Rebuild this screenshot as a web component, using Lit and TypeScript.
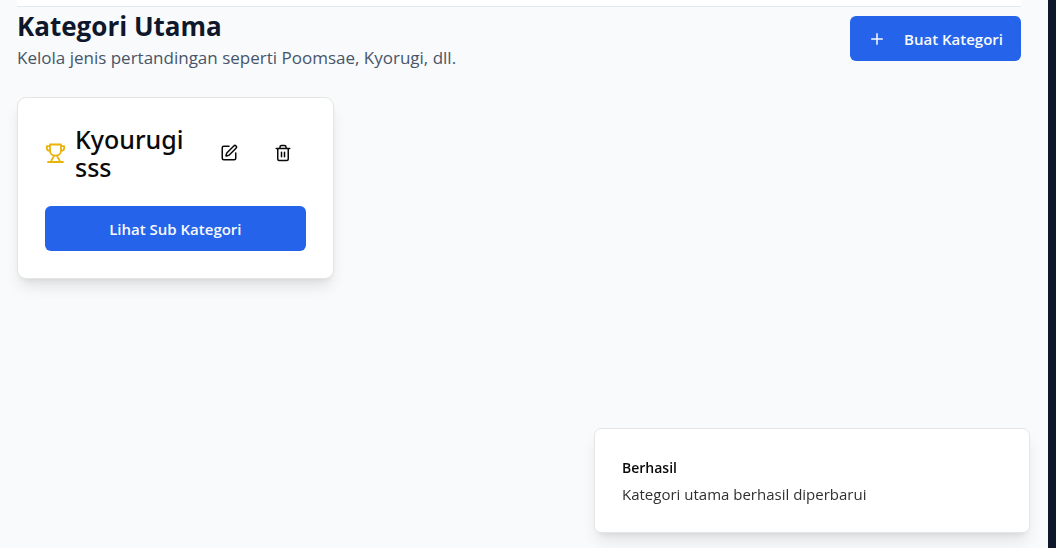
import { LitElement, html, css } from "lit";
import { customElement } from "lit/decorators.js";

@customElement("app-root")
export class AppRoot extends LitElement {
  static styles = css`
    :host {
      display: block;
      min-height: 100vh;
      box-sizing: border-box;
      border-right: 8px solid #0f172a;
      background: #f8fafc;
      color: #0a0a0a;
      font-family: "Segoe UI", "Open Sans", "Noto Sans", sans-serif;
      font-size: 15px;
      line-height: 22px;
    }
    * {
      box-sizing: border-box;
    }
    h1,
    h2,
    p {
      margin: 0;
    }
    .page {
      padding: 0 27px 0 17px;
    }
    .topbar {
      height: 7px;
      background: #fff;
      border-bottom: 1px solid #e2e8f0;
    }
    .head {
      display: flex;
      justify-content: space-between;
      align-items: center;
    }
    .title {
      font-size: 26px;
      line-height: 38px;
      font-weight: 700;
      color: #0f172a;
    }
    .subtitle {
      font-size: 17px;
      line-height: 25px;
      color: #475569;
    }
    button {
      font: inherit;
      border: 0;
      cursor: pointer;
    }
    .primary {
      display: flex;
      align-items: center;
      justify-content: center;
      height: 45px;
      padding: 0 18px;
      border-radius: 6px;
      background: #2563eb;
      color: #f8fafc;
      font-weight: 600;
    }
    .create {
      gap: 18px;
    }
    .grid {
      display: grid;
      grid-template-columns: repeat(3, minmax(0, 1fr));
      gap: 27px;
      margin-top: 27px;
    }
    .card {
      padding: 27px;
      border: 1px solid #e5e5e5;
      border-radius: 9px;
      background: #fff;
      box-shadow: 0 10px 15px -3px #0000001a, 0 4px 6px -4px #0000001a;
    }
    .card-head {
      display: flex;
      align-items: center;
      justify-content: space-between;
      margin-bottom: 25px;
    }
    .name {
      display: flex;
      align-items: center;
      gap: 9px;
      min-width: 0;
    }
    .name h2 {
      width: min-content;
      font-family: "Segoe UI", "Noto Sans", sans-serif;
      font-size: 25px;
      line-height: 28px;
      font-weight: 500;
    }
    .trophy {
      flex: none;
      color: #eab308;
    }
    .actions {
      display: flex;
      gap: 9px;
    }
    .icon {
      display: grid;
      place-items: center;
      width: 45px;
      height: 45px;
      padding: 0;
      background: none;
      color: #0a0a0a;
    }
    .wide {
      width: 100%;
    }
    svg {
      display: block;
      fill: none;
      stroke: currentColor;
      stroke-width: 2;
      stroke-linecap: round;
      stroke-linejoin: round;
    }
    .toast {
      position: fixed;
      right: 26px;
      bottom: 15px;
      width: 436px;
      max-width: calc(100% - 52px);
      padding: 27px;
      border: 1px solid #e5e5e5;
      border-radius: 7px;
      background: #fff;
      box-shadow: 0 10px 15px -3px #0000001a, 0 4px 6px -4px #0000001a;
    }
    .toast-title {
      font-size: 14px;
      line-height: 24px;
      font-weight: 600;
      margin-bottom: 3px;
    }
    .toast-text {
      color: #303030;
    }
  `;

  render() {
    return html`
      <main class="page">
        <div class="topbar"></div>
        <header class="head">
          <div>
            <h1 class="title">Kategori Utama</h1>
            <p class="subtitle">Kelola jenis pertandingan seperti Poomsae, Kyorugi, dll.</p>
          </div>
          <button class="primary create">
            <svg width="18" height="18" viewBox="0 0 24 24" aria-hidden="true">
              <path d="M5 12h14M12 5v14" />
            </svg>
            Buat Kategori
          </button>
        </header>
        <section class="grid">
          <article class="card">
            <div class="card-head">
              <div class="name">
                <svg class="trophy" width="21" height="21" viewBox="0 0 21 21" aria-hidden="true">
                  <path
                    stroke-width="1.8"
                    d="M5 1.500h11v6.200c0 3-2.400 5-5.500 5S5 10.700 5 7.700zM5 3.200H1.800v1.500c0 2 1.200 3.200 3.200 3.200M16 3.200h3.200v1.500c0 2-1.200 3.200-3.200 3.200M8.800 12.800c0 2.500-2.500 2.800-2.500 5.700M12.200 12.800c0 2.500 2.500 2.800 2.500 5.700M3 19h15"
                  />
                </svg>
                <h2>Kyourugi sss</h2>
              </div>
              <div class="actions">
                <button class="icon" aria-label="Edit kategori">
                  <svg width="18" height="18" viewBox="0 0 24 24" aria-hidden="true">
                    <path d="M12 3H5a2 2 0 0 0-2 2v14a2 2 0 0 0 2 2h14a2 2 0 0 0 2-2v-7" />
                    <path
                      d="M18.375 2.625a1 1 0 0 1 3 3l-9.013 9.014a2 2 0 0 1-.853.505l-2.873.84a.5.5 0 0 1-.62-.62l.84-2.873a2 2 0 0 1 .506-.852z"
                    />
                  </svg>
                </button>
                <button class="icon" aria-label="Hapus kategori">
                  <svg width="18" height="18" viewBox="0 0 24 24" aria-hidden="true">
                    <path
                      d="M3 6h18M19 6v14c0 1-1 2-2 2H7c-1 0-2-1-2-2V6M8 6V4c0-1 1-2 2-2h4c1 0 2 1 2 2v2M10 11v6M14 11v6"
                    />
                  </svg>
                </button>
              </div>
            </div>
            <button class="primary wide">Lihat Sub Kategori</button>
          </article>
        </section>
      </main>
      <div class="toast" role="status">
        <p class="toast-title">Berhasil</p>
        <p class="toast-text">Kategori utama berhasil diperbarui</p>
      </div>
    `;
  }
}
